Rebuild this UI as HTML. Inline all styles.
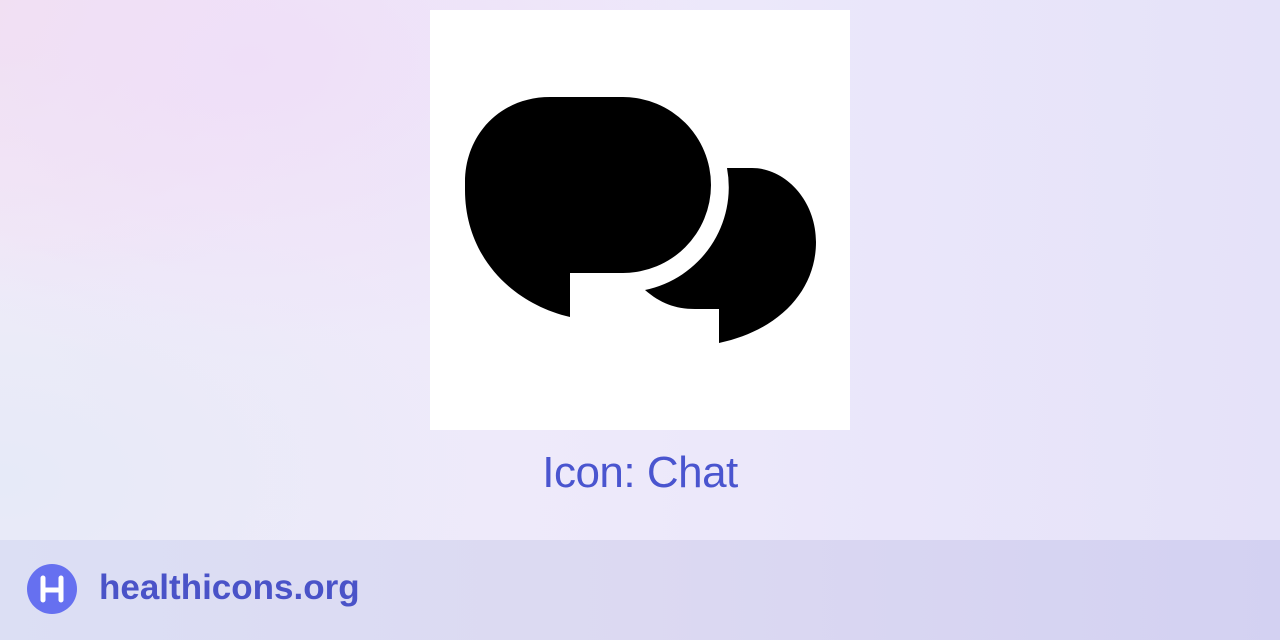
<!DOCTYPE html>
<html><head><meta charset="utf-8"><style>
html,body{margin:0;padding:0;width:1280px;height:640px;overflow:hidden}
body{position:relative;font-family:"Liberation Sans",sans-serif;
background:radial-gradient(ellipse 500px 300px at 250px 60px,#efdff8 0%,rgba(239,223,248,0) 100%),
radial-gradient(ellipse 400px 300px at 0px 0px,#f3e0ee 0%,rgba(243,224,238,0) 100%),
radial-gradient(ellipse 500px 300px at 0px 480px,#e6eaf8 0%,rgba(230,234,248,0) 100%),
linear-gradient(90deg,#f1ecf9 0%,#ede9fa 50%,#e5e2f9 100%)}
.card{position:absolute;left:430px;top:10px;width:420px;height:420px;background:#fff}
.title{position:absolute;left:0;width:1280px;top:448px;text-align:center;font-size:44px;color:#4a55cf;letter-spacing:-0.5px}
.bar{position:absolute;left:0;top:540px;width:1280px;height:100px;background:linear-gradient(90deg,#dcdff4,#dcd9f2 50%,#d3d1f2)}
.logo{position:absolute;left:27px;top:564px;width:50px;height:50px;border-radius:50%;background:#6670f0}
.site{position:absolute;left:99px;top:568px;font-size:35px;font-weight:bold;color:#4a53c8;letter-spacing:0}
</style></head><body>
<div class="card"></div>
<svg style="position:absolute;left:0;top:0" width="1280" height="640">
<path d="M550,97 H623 A88,88 0 0 1 623,273 H570 V317 C510,303 465,255 465,190 V182 C465,135 500,97 550,97 Z" fill="#000"/>
<path d="M727,168 A105,105 0 0 1 645,290 C660,303 675,309 695,309 H719 V343 C780,330 816,290 816,242 C816,200 785,168 752,168 Z" fill="#000"/>
</svg>
<div class="title">Icon: Chat</div>
<div class="bar"></div>
<div class="logo"></div>
<svg style="position:absolute;left:0;top:0" width="1280" height="640"><g stroke="#fff" stroke-width="5" stroke-linecap="round" fill="none"><path d="M43,578 V600 M61,578 V600 M43,590 H61"/></g></svg>
<div class="site">healthicons.org</div>
</body></html>
